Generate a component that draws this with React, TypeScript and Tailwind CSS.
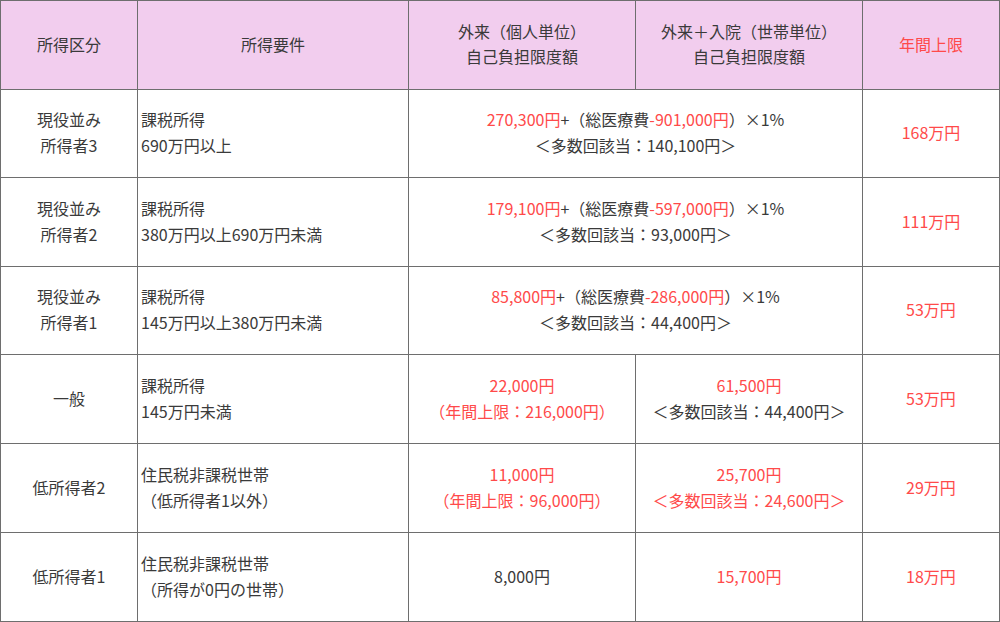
import React from 'react'

const R = ({ children }: { children: React.ReactNode }) => <span className="text-[#ff4a4a]">{children}</span>

const td = 'border border-[#6e6e6e] align-middle pb-[3px]'

const App = () => {
  return (
    <div className="w-[1000px] h-[622px] bg-white text-[#3a3a3a] text-[16px] leading-[26px]" style={{ fontFamily: '"Noto Sans CJK JP", "Noto Sans", sans-serif' }}>
      <table className="w-[999px] table-fixed border-collapse">
        <colgroup>
          <col className="w-[137px]" />
          <col className="w-[271px]" />
          <col className="w-[227px]" />
          <col className="w-[227px]" />
          <col className="w-[137px]" />
        </colgroup>
        <thead>
          <tr className="h-[89px] bg-[#f2cdee] font-normal">
            <th className={`${td} font-normal text-center`}>所得区分</th>
            <th className={`${td} font-normal text-center`}>所得要件</th>
            <th className={`${td} font-normal text-center leading-[25px]`}>外来（個人単位）<br />自己負担限度額</th>
            <th className={`${td} font-normal text-center leading-[25px]`}>外来＋入院（世帯単位）<br />自己負担限度額</th>
            <th className={`${td} font-normal text-center text-[#ff4a4a]`}>年間上限</th>
          </tr>
        </thead>
        <tbody>
          <tr className="h-[88px]">
            <td className={`${td} text-center`}>現役並み<br />所得者3</td>
            <td className={`${td} pl-[3px]`}>課税所得<br />690万円以上</td>
            <td className={`${td} text-center`} colSpan={2}>
              <R>270,300円</R>+（総医療費<R>-901,000円</R>）×1%<br />＜多数回該当：140,100円＞
            </td>
            <td className={`${td} text-center text-[#ff4a4a]`}>168万円</td>
          </tr>
          <tr className="h-[89px]">
            <td className={`${td} text-center`}>現役並み<br />所得者2</td>
            <td className={`${td} pl-[3px]`}>課税所得<br />380万円以上690万円未満</td>
            <td className={`${td} text-center`} colSpan={2}>
              <R>179,100円</R>+（総医療費<R>-597,000円</R>）×1%<br />＜多数回該当：93,000円＞
            </td>
            <td className={`${td} text-center text-[#ff4a4a]`}>111万円</td>
          </tr>
          <tr className="h-[88px]">
            <td className={`${td} text-center`}>現役並み<br />所得者1</td>
            <td className={`${td} pl-[3px]`}>課税所得<br />145万円以上380万円未満</td>
            <td className={`${td} text-center`} colSpan={2}>
              <R>85,800円</R>+（総医療費<R>-286,000円</R>）×1%<br />＜多数回該当：44,400円＞
            </td>
            <td className={`${td} text-center text-[#ff4a4a]`}>53万円</td>
          </tr>
          <tr className="h-[89px]">
            <td className={`${td} text-center`}>一般</td>
            <td className={`${td} pl-[3px]`}>課税所得<br />145万円未満</td>
            <td className={`${td} text-center text-[#ff4a4a]`}>22,000円<br />（年間上限：216,000円）</td>
            <td className={`${td} text-center`}><R>61,500円</R><br />＜多数回該当：44,400円＞</td>
            <td className={`${td} text-center text-[#ff4a4a]`}>53万円</td>
          </tr>
          <tr className="h-[89px]">
            <td className={`${td} text-center`}>低所得者2</td>
            <td className={`${td} pl-[3px]`}>住民税非課税世帯<br />（低所得者1以外）</td>
            <td className={`${td} text-center text-[#ff4a4a]`}>11,000円<br />（年間上限：96,000円）</td>
            <td className={`${td} text-center text-[#ff4a4a]`}>25,700円<br />＜多数回該当：24,600円＞</td>
            <td className={`${td} text-center text-[#ff4a4a]`}>29万円</td>
          </tr>
          <tr className="h-[89px]">
            <td className={`${td} text-center`}>低所得者1</td>
            <td className={`${td} pl-[3px]`}>住民税非課税世帯<br />（所得が0円の世帯）</td>
            <td className={`${td} text-center`}>8,000円</td>
            <td className={`${td} text-center text-[#ff4a4a]`}>15,700円</td>
            <td className={`${td} text-center text-[#ff4a4a]`}>18万円</td>
          </tr>
        </tbody>
      </table>
    </div>
  )
}

export default App
